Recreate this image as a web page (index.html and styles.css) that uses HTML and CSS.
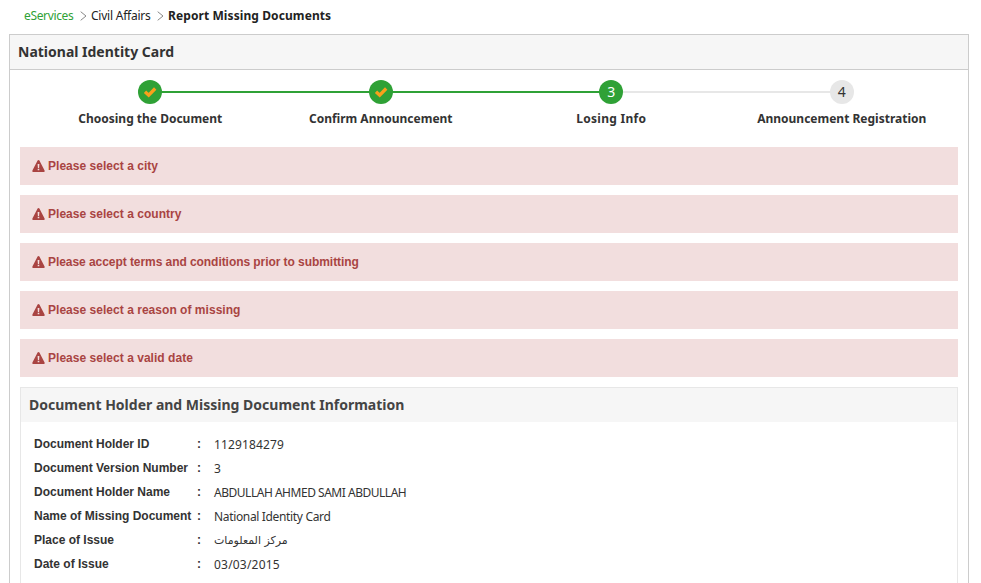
FILE: index.html
```html
<!DOCTYPE html>
<html lang="en">
<head>
<meta charset="utf-8">
<title>Report Missing Documents</title>
<link rel="stylesheet" href="styles.css">
</head>
<body>
<svg class="defs" width="0" height="0" aria-hidden="true">
  <symbol id="warn" viewBox="0 0 13 12"><path fill="#a94442" d="M6.5 0Q7.100 0 7.400.6L12.600 10.400Q13 12 11.900 12H1.100Q0 12 .4 10.400L5.600.6Q5.900 0 6.500 0Z"/><path fill="#f2dede" d="M5.600 4H7.400L7.100 8H5.900ZM5.700 8.800H7.300V10.300H5.700Z"/></symbol>
  <symbol id="check" viewBox="0 0 14 12"><path d="M2 5.700 5.700 9.200 12.200 2.500" fill="none" stroke="#f9a01b" stroke-width="3.3"/></symbol>
  <symbol id="chevron" viewBox="0 0 7 10"><path d="M.7.7 6 5 .7 9.300" fill="none" stroke="#888" stroke-width="1"/></symbol>
</svg>
<nav class="crumbs">
  <a class="crumb home">eServices</a><svg class="sep"><use href="#chevron"/></svg>
  <span class="crumb mid">Civil Affairs</span><svg class="sep"><use href="#chevron"/></svg>
  <strong class="crumb current">Report Missing Documents</strong>
</nav>
<main class="card">
  <h1 class="card-title">National Identity Card</h1>
  <ol class="steps">
    <li class="step done"><span class="dot"><svg class="check"><use href="#check"/></svg></span><span class="label">Choosing the Document</span></li>
    <li class="step done"><span class="dot"><svg class="check"><use href="#check"/></svg></span><span class="label">Confirm Announcement</span></li>
    <li class="step active"><span class="dot">3</span><span class="label wide">Losing Info</span></li>
    <li class="step"><span class="dot">4</span><span class="label">Announcement Registration</span></li>
  </ol>
  <div class="alerts">
    <div class="alert"><svg class="warn"><use href="#warn"/></svg><span>Please select a city</span></div>
    <div class="alert"><svg class="warn"><use href="#warn"/></svg><span>Please select a country</span></div>
    <div class="alert"><svg class="warn"><use href="#warn"/></svg><span class="long">Please accept terms and conditions prior to submitting</span></div>
    <div class="alert"><svg class="warn"><use href="#warn"/></svg><span>Please select a reason of missing</span></div>
    <div class="alert"><svg class="warn"><use href="#warn"/></svg><span>Please select a valid date</span></div>
  </div>
  <section class="info">
    <h2 class="info-title">Document Holder and Missing Document Information</h2>
    <dl class="rows">
      <div class="row"><dt>Document Holder ID</dt><span class="colon">:</span><dd class="num">1129184279</dd></div>
      <div class="row"><dt>Document Version Number</dt><span class="colon">:</span><dd class="num">3</dd></div>
      <div class="row"><dt>Document Holder Name</dt><span class="colon">:</span><dd class="name">ABDULLAH AHMED SAMI ABDULLAH</dd></div>
      <div class="row"><dt>Name of Missing Document</dt><span class="colon">:</span><dd class="doc">National Identity Card</dd></div>
      <div class="row"><dt>Place of Issue</dt><span class="colon">:</span><dd class="arabic" lang="ar" dir="rtl">مركز المعلومات</dd></div>
      <div class="row"><dt>Date of Issue</dt><span class="colon">:</span><dd class="date">03/03/2015</dd></div>
    </dl>
  </section>
</main>
</body>
</html>
```
FILE: styles.css
```css
* { box-sizing: border-box; }
html, body { height: 100%; }
body {
  display: flex;
  flex-direction: column;
  margin: 0;
  overflow: hidden;
  background: #fff;
  color: #333;
  font: 12px/16px "Noto Sans", sans-serif;
}
.defs { display: block; height: 0; flex: none; }
h1, h2, ol, dl, dd { margin: 0; padding: 0; }
.crumbs { display: flex; flex: none; align-items: center; height: 34px; padding: 0 0 3px 24px; color: #222; white-space: nowrap; }
.sep { width: 7px; height: 10px; margin: 0 4px 0 6px; }
.home { color: #2fa136; width: 50px; letter-spacing: -.35px; }
.mid { width: 60px; letter-spacing: -.23px; }
.current { letter-spacing: .09px; }
.card { display: flex; flex: 1; flex-direction: column; width: 960px; min-height: 0; margin-left: 9px; border: 1px solid #ccc; border-bottom: 0; }
.card-title { flex: none; height: 35px; padding-left: 8px; border-bottom: 1px solid #ccc; background: #f6f6f6; font-size: 14px; line-height: 34px; }
.steps { display: grid; flex: none; grid-template-columns: repeat(4, 1fr); padding: 10px 11px 0 25px; height: 77px; list-style: none; }
.step { position: relative; display: flex; flex-direction: column; align-items: center; font-weight: bold; white-space: nowrap; }
.step + .step::before { content: ""; position: absolute; top: 11px; right: 50%; width: 100%; height: 2px; background: #e7e7e7; }
.step + .step.done::before, .step + .step.active::before { background: #2fa136; }
.dot { position: relative; z-index: 1; display: flex; align-items: center; justify-content: center; width: 24px; height: 24px; border-radius: 50%; background: #e7e7e7; font-size: 14px; font-weight: normal; }
.done .dot, .active .dot { background: #2fa136; color: #fff; }
.check { width: 14px; height: 12px; }
.label { margin-top: 7px; }
.label.wide { letter-spacing: .3px; }
.alerts { display: grid; flex: none; gap: 10px; padding: 0 10px; }
.alert { display: flex; align-items: center; height: 38px; padding: 0 12px; background: #f2dede; color: #a94442; font: bold 12px/16px "Liberation Sans", sans-serif; letter-spacing: .03px; }
.alert .long { letter-spacing: -.06px; }
.warn { width: 13px; height: 12px; margin: 0 3px 1px 0; }
.info { flex: 1; min-height: 0; margin: 10px 10px 0; border: 1px solid #e7e7e7; border-bottom: 0; }
.info-title { height: 34px; padding-left: 8px; background: #f6f6f6; color: #444; font-size: 14px; line-height: 34px; }
.rows { padding: 10px 13px 0; }
.row { display: grid; grid-template-columns: 163px 17px auto; justify-content: start; height: 24px; line-height: 24px; white-space: nowrap; }
dt, .colon { font-family: "Liberation Sans", sans-serif; font-weight: bold; }
.colon { padding-top: 1px; line-height: 23px; }
dd { padding-top: 1px; line-height: 23px; }
.num { letter-spacing: .13px; }
.name { letter-spacing: -.48px; }
.doc { letter-spacing: -.34px; }
.date { letter-spacing: .2px; }
.arabic { font-family: "DejaVu Sans", sans-serif; font-size: 11px; }
```
